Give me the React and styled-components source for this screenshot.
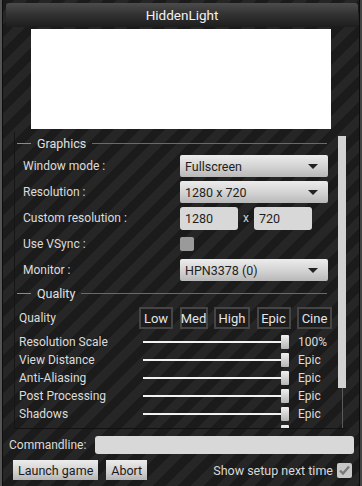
import styled, { createGlobalStyle } from "styled-components";

const Global = createGlobalStyle`
  body {
    margin: 0;
    background: #111;
    font-family: Roboto, "Liberation Sans", sans-serif;
  }
`;

const stripes = `
  repeating-linear-gradient(
    135deg,
    #1b1b1b 0px,
    #1b1b1b 9px,
    #262626 9px,
    #262626 18px
  )
`;

const Window = styled.div`
    width: 362px;
    height: 486px;
    box-sizing: border-box;
    background: ${stripes};
    border-left: 2px solid #555;
    border-right: 2px solid #444;
    box-shadow: inset 1px 0 0 #0c0c0c, inset -1px 0 0 #0c0c0c;
    display: flex;
    flex-direction: column;
    overflow: hidden;
    color: #dcdcdc;
    font-size: 12px;
`;

const TitleBar = styled.div`
    margin: 3px 2px 0 4px;
    height: 24px;
    border-radius: 3px 3px 0 0;
    background: linear-gradient(180deg, #4c4c4c 0%, #333 45%, #1d1d1d 100%);
    display: flex;
    align-items: center;
    justify-content: center;
    color: #f2f2f2;
    font-size: 13.5px;
`;

const Preview = styled.div`
    width: 300px;
    height: 100px;
    margin: 2px 0 0 29px;
    background: #fff;
`;

const ScrollArea = styled.div`
    margin: 3px 14px 0 12px;
    height: 296px;
    display: flex;
    border-left: 1px solid #151515;
    border-bottom: 1px solid #121212;
    overflow: hidden;
`;

const ScrollContent = styled.div`
    flex: 1;
    padding: 3px 0 0 2px;
    overflow: hidden;
`;

const GroupHeader = styled.div`
    display: flex;
    align-items: center;
    height: 16px;
    gap: 6px;
    font-size: 12.5px;
    color: #e0e0e0;
    &::before {
        content: "";
        width: 14px;
        height: 1px;
        background: #8a8a8a;
    }
    &::after {
        content: "";
        flex: 1;
        height: 1px;
        margin-right: 6px;
        background: #6a6a6a;
    }
`;

const Form = styled.div`
    display: grid;
    grid-template-columns: 157px 1fr;
    grid-auto-rows: 22px;
    row-gap: 4px;
    padding: 4px 0 4px 6px;
    align-items: center;
`;

const Label = styled.div`
    color: #dcdcdc;
`;

const Select = styled.div`
    width: 148px;
    height: 22px;
    box-sizing: border-box;
    border-radius: 2px;
    background: linear-gradient(180deg, #ececec 0%, #d2d2d2 55%, #b8b8b8 100%);
    color: #1e1e1e;
    display: flex;
    align-items: center;
    justify-content: space-between;
    padding: 0 10px 0 5px;
    font-size: 12.5px;
    &::after {
        content: "";
        border-left: 5px solid transparent;
        border-right: 5px solid transparent;
        border-top: 5px solid #222;
    }
`;

const ResRow = styled.div`
    display: flex;
    align-items: center;
    gap: 5px;
    color: #cfcfcf;
`;

const NumInput = styled.div`
    width: 58px;
    height: 23px;
    box-sizing: border-box;
    border-radius: 3px;
    background: #d8d8d8;
    color: #1e1e1e;
    display: flex;
    align-items: center;
    padding-left: 5px;
    font-size: 12.5px;
`;

const GrayBox = styled.div`
    width: 14px;
    height: 14px;
    border-radius: 2px;
    background: #9a9a9a;
`;

const QualityRow = styled.div`
    display: flex;
    align-items: center;
    height: 22px;
    margin: 6px 0 4px 2px;
`;

const QualityLabel = styled.div`
    width: 120px;
`;

const Presets = styled.div`
    width: 193px;
    display: flex;
    justify-content: space-between;
`;

const Preset = styled.div`
    width: ${p => p.$w}px;
    height: 22px;
    box-sizing: border-box;
    border: 2px solid #454545;
    background: #1c1c1c;
    display: flex;
    align-items: center;
    justify-content: center;
    color: #e4e4e4;
    font-size: 13px;
`;

const SliderRow = styled.div`
    display: flex;
    align-items: center;
    height: 18px;
    margin-left: 2px;
`;

const SliderLabel = styled.div`
    width: 124px;
`;

const Track = styled.div`
    width: 146px;
    height: 14px;
    display: flex;
    align-items: center;
    &::before {
        content: "";
        flex: 1;
        height: 2px;
        background: #f2f2f2;
    }
    &::after {
        content: "";
        width: 8px;
        height: 14px;
        border-radius: 1px;
        background: linear-gradient(180deg, #f0f0f0, #b5b5b5);
    }
`;

const Value = styled.div`
    margin-left: 9px;
    color: #dcdcdc;
`;

const Scrollbar = styled.div`
    width: 8px;
    margin: 4px 0 0 5px;
    display: flex;
    flex-direction: column;
    align-items: center;
`;

const Thumb = styled.div`
    width: 8px;
    height: 252px;
    background: #d2d2d2;
`;

const TrackLine = styled.div`
    flex: 1;
    width: 1px;
    background: #5a5a5a;
`;

const CommandRow = styled.div`
    display: flex;
    align-items: center;
    gap: 9px;
    margin: 7px 6px 0 7px;
    height: 18px;
`;

const CommandInput = styled.div`
    flex: 1;
    height: 18px;
    border-radius: 3px;
    background: #d8d8d8;
`;

const BottomRow = styled.div`
    display: flex;
    align-items: center;
    gap: 8px;
    margin: 6px 8px 0 11px;
    height: 20px;
`;

const Button = styled.div`
    height: 20px;
    box-sizing: border-box;
    padding: 0 ${p => p.$pad}px;
    background: linear-gradient(180deg, #ececec 0%, #d0d0d0 60%, #b5b5b5 100%);
    color: #1a1a1a;
    display: flex;
    align-items: center;
    font-size: 12.5px;
`;

const Spacer = styled.div`
    flex: 1;
`;

const ShowSetup = styled.div`
    display: flex;
    align-items: center;
    gap: 4px;
    color: #d8d8d8;
    font-size: 12.5px;
`;

const CheckBox = styled.div`
    width: 15px;
    height: 15px;
    border-radius: 2px;
    background: #c8c8c8;
    display: flex;
    align-items: center;
    justify-content: center;
`;

const sliders = [
    ["Resolution Scale", "100%"],
    ["View Distance", "Epic"],
    ["Anti-Aliasing", "Epic"],
    ["Post Processing", "Epic"],
    ["Shadows", "Epic"],
];

const presets = [["Low", 34], ["Med", 28], ["High", 36], ["Epic", 34], ["Cine", 35]];

export default function App() {
    return (
        <Window>
            <Global />
            <TitleBar>HiddenLight</TitleBar>
            <Preview />
            <ScrollArea>
                <ScrollContent>
                    <GroupHeader>Graphics</GroupHeader>
                    <Form>
                        <Label>Window mode :</Label>
                        <Select>Fullscreen</Select>
                        <Label>Resolution :</Label>
                        <Select>1280 x 720</Select>
                        <Label>Custom resolution :</Label>
                        <ResRow>
                            <NumInput>1280</NumInput>
                            x
                            <NumInput>720</NumInput>
                        </ResRow>
                        <Label>Use VSync :</Label>
                        <GrayBox />
                        <Label>Monitor :</Label>
                        <Select>HPN3378 (0)</Select>
                    </Form>
                    <GroupHeader>Quality</GroupHeader>
                    <QualityRow>
                        <QualityLabel>Quality</QualityLabel>
                        <Presets>
                            {presets.map(([name, w]) => (
                                <Preset key={name} $w={w}>{name}</Preset>
                            ))}
                        </Presets>
                    </QualityRow>
                    {sliders.map(([name, value]) => (
                        <SliderRow key={name}>
                            <SliderLabel>{name}</SliderLabel>
                            <Track />
                            <Value>{value}</Value>
                        </SliderRow>
                    ))}
                    <SliderRow>
                        <SliderLabel />
                        <Track />
                    </SliderRow>
                </ScrollContent>
                <Scrollbar>
                    <Thumb />
                    <TrackLine />
                </Scrollbar>
            </ScrollArea>
            <CommandRow>
                <Label>Commandline:</Label>
                <CommandInput />
            </CommandRow>
            <BottomRow>
                <Button $pad={5}>Launch game</Button>
                <Button $pad={5}>Abort</Button>
                <Spacer />
                <ShowSetup>
                    Show setup next time
                    <CheckBox>
                        <svg width="11" height="10" viewBox="0 0 11 10">
                            <path d="M1 5.5 L4 8.5 L10 1.5" fill="none" stroke="#7a7a7a" strokeWidth="2.4" />
                        </svg>
                    </CheckBox>
                </ShowSetup>
            </BottomRow>
        </Window>
    );
}
